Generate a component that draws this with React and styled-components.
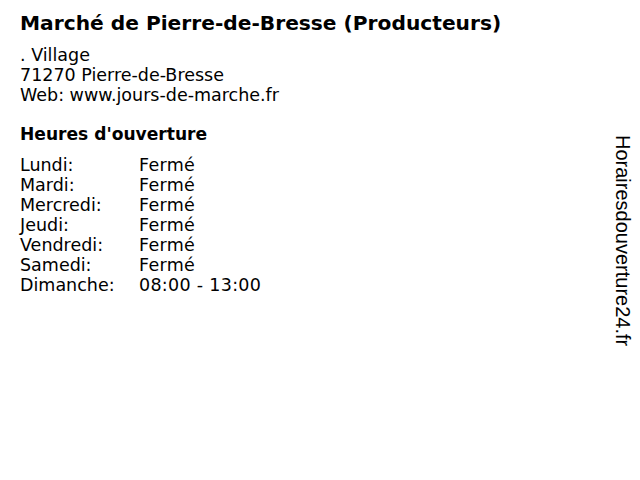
import React from 'react'
import styled, { createGlobalStyle } from 'styled-components'

const Global = createGlobalStyle`
  html, body {
    margin: 0;
    padding: 0;
    background: #fff;
  }
  body {
    font-family: 'DejaVu Sans', sans-serif;
    color: #000;
  }
`

const Page = styled.div`
  width: 640px;
  height: 480px;
  display: flex;
  box-sizing: border-box;
  overflow: hidden;
`

const Main = styled.main`
  flex: 1;
  padding: 11px 0 0 20px;
`

const Title = styled.h1`
  margin: 0;
  font-size: 20.2px;
  font-weight: bold;
  line-height: 24px;
`

const Address = styled.div`
  margin-top: 10px;
  font-size: 17.5px;
  line-height: 20px;
`

const Heading = styled.h2`
  margin: 19px 0 0;
  font-size: 17.1px;
  font-weight: bold;
  line-height: 20px;
`

const Hours = styled.div`
  margin-top: 11px;
  display: grid;
  grid-template-columns: 119px auto;
  font-size: 17.5px;
  line-height: 20px;
`

const Time = styled.span`
  letter-spacing: 0.3px;
`

const Side = styled.aside`
  width: 40px;
  box-sizing: border-box;
  display: flex;
  justify-content: center;
  padding: 135px 0 0 6px;
`

const Brand = styled.span`
  writing-mode: vertical-rl;
  font-family: 'Liberation Sans', Arial, sans-serif;
  font-size: 20px;
  line-height: 20px;
  color: #000;
`

const hours = [
  ['Lundi:', 'Fermé'],
  ['Mardi:', 'Fermé'],
  ['Mercredi:', 'Fermé'],
  ['Jeudi:', 'Fermé'],
  ['Vendredi:', 'Fermé'],
  ['Samedi:', 'Fermé'],
  ['Dimanche:', '08:00 - 13:00']
]

export default function App() {
  return (
    <Page>
      <Global />
      <Main>
        <Title>Marché de Pierre-de-Bresse (Producteurs)</Title>
        <Address>
          <div>. Village</div>
          <div>71270 Pierre-de-Bresse</div>
          <div>Web: www.jours-de-marche.fr</div>
        </Address>
        <Heading>Heures d'ouverture</Heading>
        <Hours>
          {hours.map(([day, time]) => (
            <React.Fragment key={day}>
              <span>{day}</span>
              <Time>{time}</Time>
            </React.Fragment>
          ))}
        </Hours>
      </Main>
      <Side>
        <Brand>Horairesdouverture24.fr</Brand>
      </Side>
    </Page>
  )
}
